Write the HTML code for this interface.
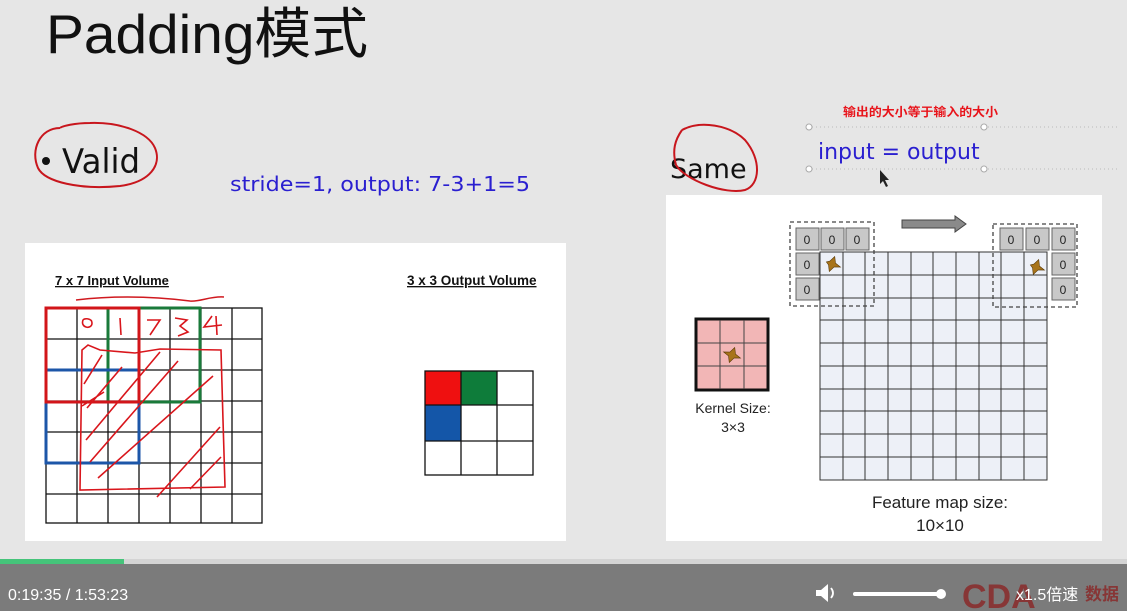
<!DOCTYPE html>
<html><head><meta charset="utf-8"><style>
html,body{margin:0;padding:0;width:1127px;height:611px;overflow:hidden;background:#e6e6e6;font-family:"Liberation Sans","Noto Sans CJK SC",sans-serif}
</style></head><body>
<svg width="1127" height="611" xmlns="http://www.w3.org/2000/svg" style="position:absolute;left:0;top:0" font-family="Liberation Sans, Noto Sans CJK SC, sans-serif">
<rect width="1127" height="611" fill="#e6e6e6"/>
<text x="46" y="53" font-size="55" fill="#111" textLength="322" lengthAdjust="spacingAndGlyphs">Padding模式</text>
<!-- Valid -->
<circle cx="46" cy="161" r="4" fill="#111"/>
<text x="62" y="173" font-size="34" fill="#111" font-family="DejaVu Sans,sans-serif" textLength="78" lengthAdjust="spacingAndGlyphs">Valid</text>
<path d="M60 128 C40 128 30 150 38 168 C45 182 80 190 120 186 C150 182 162 165 155 148 C148 132 120 122 90 123 C75 123 62 126 60 128" fill="none" stroke="#c8161d" stroke-width="2"/>
<text x="230" y="191" font-size="20" fill="#2a1fd0" font-family="DejaVu Sans,sans-serif" textLength="300" lengthAdjust="spacingAndGlyphs">stride=1, output: 7-3+1=5</text>
<!-- Same -->
<text x="670" y="178" font-size="27" fill="#111" font-family="DejaVu Sans,sans-serif">Same</text>
<path d="M682 130 C700 120 730 125 745 140 C762 160 760 185 745 190 C725 195 685 180 676 165 C672 150 675 140 682 130" fill="none" stroke="#c8161d" stroke-width="2"/>
<text x="843" y="116" font-size="12" font-weight="bold" fill="#e8141b" font-family="Noto Sans CJK SC,sans-serif" textLength="155" lengthAdjust="spacingAndGlyphs">输出的大小等于输入的大小</text>
<line x1="808" y1="127" x2="1120" y2="127" stroke="#bbb" stroke-dasharray="1 3"/>
<line x1="808" y1="169" x2="1120" y2="169" stroke="#bbb" stroke-dasharray="1 3"/>
<circle cx="809" cy="127" r="3" fill="#fff" stroke="#aaa"/><circle cx="984" cy="127" r="3" fill="#fff" stroke="#aaa"/>
<circle cx="809" cy="169" r="3" fill="#fff" stroke="#aaa"/><circle cx="984" cy="169" r="3" fill="#fff" stroke="#aaa"/>
<text x="818" y="159" font-size="22" fill="#2a1fd0" font-family="DejaVu Sans,sans-serif">input = output</text>
<path d="M880 170 L880 184 L883 181 L886 187 L888 186 L885 180 L889 180 Z" fill="#222"/>
<!-- left panel -->
<rect x="25" y="243" width="541" height="298" fill="#fff"/>
<text x="55" y="285" font-size="13" font-weight="bold" fill="#111" text-decoration="underline">7 x 7 Input Volume</text>
<text x="407" y="285" font-size="13.5" font-weight="bold" fill="#111" text-decoration="underline">3 x 3 Output Volume</text>
<path d="M76 300 C110 296 150 296 190 301 C200 302 210 296 224 297" fill="none" stroke="#d0191f" stroke-width="1.5"/>
<g stroke="#111" stroke-width="1.3" fill="none">
<rect x="46" y="308" width="216" height="215"/>
<path d="M77 308V523M108 308V523M139 308V523M170 308V523M201 308V523M232 308V523M46 339H262M46 370H262M46 401H262M46 432H262M46 463H262M46 494H262"/>
</g>
<rect x="108" y="308" width="92" height="94" fill="none" stroke="#1a7a3a" stroke-width="3"/>
<rect x="46" y="370" width="93" height="93" fill="none" stroke="#1c56a8" stroke-width="3"/>
<rect x="46" y="308" width="93" height="94" fill="none" stroke="#d2151a" stroke-width="3"/>
<g fill="none" stroke="#d9161c" stroke-width="1.6">
<path d="M82 350 L80 490 L225 487 L223 420 L221 350 L160 349 L135 353 L100 350 L88 345 Z"/>
<path d="M84 384 L102 355M87 408 L122 367M86 440 L160 352M90 462 L178 361M98 478 L213 376M157 497 L220 427M190 489 L221 457M82 406 L104 392"/>
<path d="M83 320 C80 328 92 330 92 323 C92 318 84 318 83 320M120 318 L121 335M147 320 L160 320 L150 335 M175 318 L187 320 L180 326 L188 332 L178 336M212 316 L204 327 L222 325M216 316 L217 335"/>
</g>
<rect x="425" y="371" width="36" height="34" fill="#ef1010"/>
<rect x="461" y="371" width="36" height="34" fill="#0e7c3a"/>
<rect x="425" y="405" width="36" height="36" fill="#1456a8"/>
<g stroke="#111" stroke-width="1.3" fill="none"><rect x="425" y="371" width="108" height="104"/><path d="M461 371V475M497 371V475M425 405H533M425 441H533"/></g>
<!-- right panel -->
<rect x="666" y="195" width="436" height="346" fill="#fff"/>
<rect x="820" y="252" width="227" height="228" fill="#edf0f7"/>
<g stroke="#333" stroke-width="1" fill="none">
<rect x="820" y="252" width="227" height="228"/>
<path d="M843 252V480M865 252V480M888 252V480M911 252V480M933 252V480M956 252V480M979 252V480M1001 252V480M1024 252V480M820 275H1047M820 298H1047M820 320H1047M820 343H1047M820 366H1047M820 389H1047M820 411H1047M820 434H1047M820 457H1047"/>
</g>
<g fill="#c8c8c8" stroke="#666" stroke-width="1">
<rect x="796" y="228" width="23" height="22"/><rect x="821" y="228" width="23" height="22"/><rect x="846" y="228" width="23" height="22"/>
<rect x="796" y="253" width="23" height="22"/><rect x="796" y="278" width="23" height="22"/>
<rect x="1000" y="228" width="23" height="22"/><rect x="1026" y="228" width="23" height="22"/><rect x="1052" y="228" width="23" height="22"/>
<rect x="1052" y="253" width="23" height="22"/><rect x="1052" y="278" width="23" height="22"/>
</g>
<g font-size="12" fill="#222" text-anchor="middle">
<text x="807" y="244">0</text><text x="832" y="244">0</text><text x="857" y="244">0</text><text x="807" y="269">0</text><text x="807" y="294">0</text>
<text x="1011" y="244">0</text><text x="1037" y="244">0</text><text x="1063" y="244">0</text><text x="1063" y="269">0</text><text x="1063" y="294">0</text>
</g>
<rect x="790" y="222" width="84" height="84" fill="none" stroke="#444" stroke-width="1.3" stroke-dasharray="4 3"/>
<rect x="993" y="224" width="84" height="83" fill="none" stroke="#444" stroke-width="1.3" stroke-dasharray="4 3"/>
<path d="M902 220 H955 V216 L966 224 L955 232 V228 H902 Z" fill="#8a8a8a" stroke="#444"/>
<g fill="#a8741a" stroke="#5a3a08" stroke-width="0.6">
<path d="M832 256 L835 262 L841 264 L835 266 L832 272 L829 266 L826 264 L829 262 Z" transform="rotate(20 832 264)"/>
<path d="M1036 259 L1039 265 L1045 267 L1039 269 L1036 275 L1033 269 L1030 267 L1033 265 Z" transform="rotate(20 1036 267)"/>
</g>
<rect x="696" y="319" width="72" height="71" fill="#f2b6b6" stroke="#111" stroke-width="3"/>
<path d="M720 320V389M744 320V389M697 343H767M697 366H767" stroke="#444" stroke-width="1"/>
<path d="M732 347 L735 353 L741 355 L735 357 L732 363 L729 357 L723 355 L729 353 Z" transform="rotate(20 732 355)" fill="#a8741a" stroke="#5a3a08" stroke-width="0.6"/>
<text x="733" y="413" font-size="14" fill="#222" text-anchor="middle">Kernel Size:</text>
<text x="733" y="432" font-size="14" fill="#222" text-anchor="middle">3×3</text>
<text x="940" y="508" font-size="17" fill="#222" text-anchor="middle">Feature map size:</text>
<text x="940" y="531" font-size="17" fill="#222" text-anchor="middle">10×10</text>
<!-- player -->
<rect x="0" y="559" width="1127" height="5" fill="#d4d4d4"/>
<rect x="0" y="559" width="124" height="5" fill="#45c47a"/>
<rect x="0" y="564" width="1127" height="47" fill="#7b7b7b"/>
<text x="8" y="600" font-size="16" fill="#fff">0:19:35 / 1:53:23</text>
<path d="M816 590 H821 L828 584 V602 L821 596 H816 Z" fill="#fff"/>
<path d="M831 588 Q835 593 831 598" stroke="#fff" stroke-width="1.8" fill="none"/>
<rect x="853" y="592" width="88" height="4" rx="2" fill="#fff"/>
<circle cx="941" cy="594" r="5" fill="#fff"/>
<text x="962" y="608" font-size="34" font-weight="bold" fill="#8a2a2a" opacity="0.85">CDA</text>
<text x="1085" y="600" font-size="17" font-weight="bold" fill="#8a2a2a" opacity="0.85">数据</text>
<text x="1016" y="600" font-size="16" fill="#fff">x1.5倍速</text>
</svg>
</body></html>
